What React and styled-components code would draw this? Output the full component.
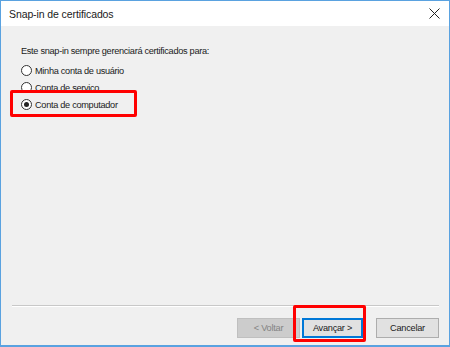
import React from 'react';
import styled, { createGlobalStyle } from 'styled-components';

const Global = createGlobalStyle`
  html, body { margin: 0; padding: 0; }
  body { width: 450px; height: 347px; overflow: hidden; background: #f0f0f0; }
`;

const Window = styled.div`
  box-sizing: border-box;
  width: 450px;
  height: 347px;
  border: 1px solid #5aa2e0;
  border-bottom-width: 2px;
  display: flex;
  flex-direction: column;
  background: #f0f0f0;
  font-family: "Liberation Sans", Arial, sans-serif;
  color: #1a1a1a;
`;

const TitleBar = styled.div`
  height: 25px;
  background: #fff;
  display: flex;
  align-items: center;
  justify-content: space-between;
  padding: 0 8px 0 8px;
  font-size: 10.5px;
  letter-spacing: -0.1px;
`;

const CloseBtn = styled.div`
  width: 14px;
  height: 14px;
  display: flex;
  align-items: center;
  justify-content: center;
`;

const Body = styled.div`
  flex: 1;
  display: flex;
  flex-direction: column;
  padding: 20px 10px 0 20px;
  font-size: 9.2px;
  letter-spacing: -0.3px;
`;

const Prompt = styled.div`
  margin-bottom: 8px;
`;

const Options = styled.div`
  display: flex;
  flex-direction: column;
  gap: 4px;
`;

const Row = styled.label`
  position: relative;
  display: flex;
  align-items: center;
  gap: 3px;
  height: 13px;
`;

const Radio = styled.span`
  box-sizing: border-box;
  width: 11px;
  height: 11px;
  border-radius: 50%;
  border: 1px solid #333;
  background: #fff;
  display: flex;
  align-items: center;
  justify-content: center;
  &::after {
    content: '';
    width: 5px;
    height: 5px;
    border-radius: 50%;
    background: ${p => (p.$checked ? '#222' : 'transparent')};
  }
`;

const Highlight = styled.span`
  position: absolute;
  left: -11px;
  top: -8px;
  width: 127px;
  height: 27px;
  box-sizing: border-box;
  border: 3px solid #ff0000;
  border-radius: 2px;
  pointer-events: none;
`;

const Spacer = styled.div`
  flex: 1;
`;

const Separator = styled.div`
  height: 1px;
  background: #c8c8c8;
  border-bottom: 1px solid #fff;
  margin: 0 0 11px -9px;
`;

const Footer = styled.div`
  display: flex;
  justify-content: flex-end;
  align-items: center;
  padding: 0 0 7px 0;
`;

const Button = styled.button`
  position: relative;
  box-sizing: border-box;
  width: ${p => p.$w || 63}px;
  height: 20px;
  margin-left: ${p => p.$gap || 0}px;
  font-family: "Liberation Sans", Arial, sans-serif;
  font-size: 9.2px;
  letter-spacing: -0.25px;
  background: ${p => (p.$disabled ? '#cccccc' : '#e1e1e1')};
  color: ${p => (p.$disabled ? '#838383' : '#1a1a1a')};
  border: 1px solid ${p => (p.$disabled ? '#bfbfbf' : p.$primary ? '#0078d7' : '#adadad')};
  box-shadow: ${p => (p.$primary ? 'inset 0 0 0 1px #0078d7' : 'none')};
  padding: 0;
`;

const ButtonMark = styled.span`
  position: absolute;
  left: -10px;
  top: -14px;
  width: 73px;
  height: 37px;
  box-sizing: border-box;
  border: 3px solid #ff0000;
  border-radius: 2px;
  pointer-events: none;
`;

const options = [
  { label: 'Minha conta de usuário', checked: false },
  { label: 'Conta de serviço', checked: false },
  { label: 'Conta de computador', checked: true },
];

export default function App() {
  return (
    <>
      <Global />
      <Window>
        <TitleBar>
          <span>Snap-in de certificados</span>
          <CloseBtn>
            <svg width="11" height="11" viewBox="0 0 11 11">
              <path d="M0.5 0.5 L10.5 10.5 M10.5 0.5 L0.5 10.5" stroke="#222" strokeWidth="1" />
            </svg>
          </CloseBtn>
        </TitleBar>
        <Body>
          <Prompt>Este snap-in sempre gerenciará certificados para:</Prompt>
          <Options>
            {options.map(o => (
              <Row key={o.label}>
                <Radio $checked={o.checked} />
                <span>{o.label}</span>
                {o.checked && <Highlight />}
              </Row>
            ))}
          </Options>
          <Spacer />
          <Separator />
          <Footer>
            <Button $disabled>&lt; Voltar</Button>
            <Button $primary $w={61} $gap={2}>
              Avançar &gt;
              <ButtonMark />
            </Button>
            <Button $gap={13}>Cancelar</Button>
          </Footer>
        </Body>
      </Window>
    </>
  );
}
